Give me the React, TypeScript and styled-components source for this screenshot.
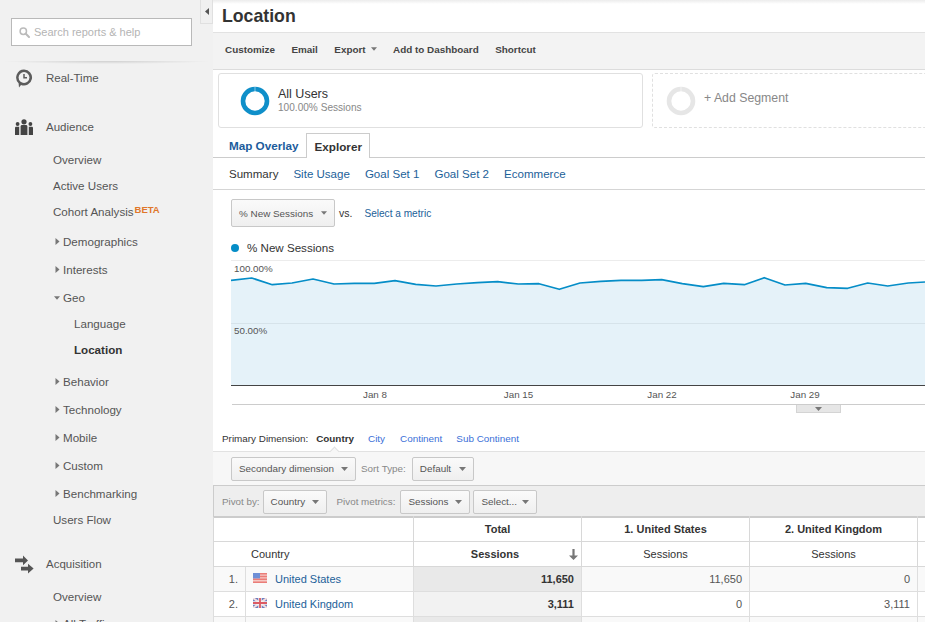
import React from 'react';
import styled, { createGlobalStyle } from 'styled-components';

const GlobalStyle = createGlobalStyle`
  html, body {
    margin: 0;
    padding: 0;
    background: #fff;
    overflow: hidden;
  }
  * {
    box-sizing: border-box;
  }
`;

const Page = styled.div`
  position: relative;
  display: flex;
  width: 925px;
  height: 622px;
  overflow: hidden;
  font-family: 'Liberation Sans', Arial, sans-serif;
  color: #333;
`;

/* sidebar */

const Sidebar = styled.aside`
  flex: 0 0 213px;
  height: 622px;
  background: #f1f1f1;
  overflow: hidden;
`;

const SearchArea = styled.div`
  height: 62px;
  padding: 18px 21px 0 11px;
`;

const SearchBox = styled.div`
  display: flex;
  align-items: center;
  gap: 4px;
  height: 28px;
  padding-left: 7px;
  background: #fff;
  border: 1px solid #b9b9b9;
  font-size: 11px;
  color: #b4b4b4;
`;

const SearchShadow = styled.div`
  height: 3px;
  margin: -1px 4px -2px;
  background: radial-gradient(ellipse at center top, rgba(0, 0, 0, 0.14), rgba(0, 0, 0, 0) 72%);
`;

const SectionRow = styled.div<{ $gap: number }>`
  display: flex;
  align-items: center;
  height: 30px;
  margin-top: ${(p) => p.$gap}px;
  font-size: 11.5px;
  color: #555;
`;

const SectionIcon = styled.span`
  display: flex;
  justify-content: center;
  width: 46px;
  padding-left: 2px;
`;

const SubItem = styled.div<{ $bold?: boolean; $indent?: number }>`
  display: flex;
  align-items: center;
  height: 26px;
  padding-left: ${(p) => p.$indent ?? 53}px;
  font-size: 11.6px;
  font-weight: ${(p) => (p.$bold ? 700 : 400)};
  color: ${(p) => (p.$bold ? '#333' : '#555')};
`;

const Beta = styled.span`
  margin: -3px 0 0 1px;
  font-size: 9.5px;
  font-weight: 700;
  color: #e0772b;
  line-height: 1;
`;

const NavGroup = styled.div<{ $gap: number }>`
  margin-top: ${(p) => p.$gap}px;
`;

const ExpandItem = styled.div<{ $open?: boolean }>`
  display: flex;
  align-items: center;
  height: 28px;
  padding-left: ${(p) => (p.$open ? 54 : 55)}px;
  font-size: 11.6px;
  color: #555;
`;

const Twisty = styled.svg<{ $open?: boolean }>`
  flex: 0 0 ${(p) => (p.$open ? 6 : 5)}px;
  width: ${(p) => (p.$open ? 6 : 5)}px;
  height: 7px;
  margin-right: 3px;
`;

const CollapseHandle = styled.div`
  position: absolute;
  left: 200px;
  top: 0;
  display: flex;
  align-items: center;
  justify-content: center;
  width: 13px;
  height: 24px;
  background: #f0f0f0;
  border: 1px solid #e0e0e0;
  border-top: 0;
`;

/* main column */

const Main = styled.main`
  flex: 1;
  min-width: 0;
`;

const TitleBar = styled.header`
  display: flex;
  align-items: center;
  height: 33px;
  padding-left: 9px;
  background: linear-gradient(#ececec 0, #fff 4px);
  border-bottom: 1px solid #e2e2e2;
`;

const Title = styled.h1`
  margin: 0;
  font-size: 17.7px;
  font-weight: 700;
  color: #333;
`;

const Toolbar = styled.div`
  display: flex;
  align-items: center;
  gap: 16.5px;
  height: 37px;
  padding: 0 0 4px 12px;
  background: #f3f3f3;
  border-bottom: 1px solid #dcdcdc;
`;

const ToolButton = styled.span`
  display: flex;
  align-items: center;
  gap: 5px;
  font-size: 9.9px;
  font-weight: 700;
  color: #444;
`;

const Segments = styled.div`
  display: flex;
  gap: 9px;
  height: 55px;
  margin: 3px 0 0 5px;
`;

const SegmentCard = styled.div<{ $ghost?: boolean }>`
  display: flex;
  align-items: center;
  flex: ${(p) => (p.$ghost ? '1' : '0 0 425px')};
  padding-left: ${(p) => (p.$ghost ? 13 : 21)}px;
  gap: 8px;
  margin-right: ${(p) => (p.$ghost ? -4 : 0)}px;
  border: 1px ${(p) => (p.$ghost ? 'dashed' : 'solid')} #e0e0e0;
  border-radius: 3px;
`;

const SegmentName = styled.div`
  font-size: 12.5px;
  line-height: 14px;
  color: #333;
`;

const SegmentMeta = styled.div`
  font-size: 10.1px;
  line-height: 13px;
  color: #888;
`;

const AddSegment = styled.span`
  margin-bottom: 5px;
  font-size: 12.3px;
  color: #888;
`;

const ViewTabs = styled.div`
  display: flex;
  align-items: flex-end;
  height: 25px;
  margin-top: 5px;
  padding-left: 9px;
  border-bottom: 1px solid #ccc;
`;

const ViewTab = styled.div<{ $active?: boolean }>`
  display: flex;
  align-items: center;
  height: ${(p) => (p.$active ? 25 : 24)}px;
  margin-bottom: ${(p) => (p.$active ? -1 : 0)}px;
  margin-right: 7px;
  padding: ${(p) => (p.$active ? '0 7px 0 8px' : '0 0 0 7px')};
  background: #fff;
  border: ${(p) => (p.$active ? '1px solid #ccc' : '0')};
  border-bottom: 0;
  font-size: 11.7px;
  font-weight: 700;
  color: ${(p) => (p.$active ? '#333' : '#1c5c9c')};
`;

const SubTabs = styled.nav`
  display: flex;
  align-items: center;
  gap: 15px;
  height: 32px;
  padding-left: 16px;
  border-bottom: 1px solid #d5d5d5;
  font-size: 11.55px;
`;

const SubTab = styled.span<{ $active?: boolean }>`
  color: ${(p) => (p.$active ? '#333' : '#1c6199')};
`;

const MetricRow = styled.div`
  display: flex;
  align-items: center;
  height: 28px;
  margin: 9px 0 0 18px;
`;

const SelectButton = styled.span<{ $w: number; $h?: number; $left?: number }>`
  display: flex;
  align-items: center;
  justify-content: space-between;
  flex: 0 0 ${(p) => p.$w}px;
  height: ${(p) => p.$h ?? 24}px;
  margin-left: ${(p) => p.$left ?? 0}px;
  padding: 0 7px;
  background: linear-gradient(#fafafa, #efefef);
  border: 1px solid #c8c8c8;
  border-radius: 2px;
  font-size: 9.9px;
  color: #555;
`;

const Versus = styled.span`
  margin-left: 4px;
  font-size: 10.5px;
  color: #333;
`;

const MetricLink = styled.span`
  margin-left: 12px;
  font-size: 10.1px;
  color: #1c6199;
`;

const Legend = styled.div`
  display: flex;
  align-items: center;
  height: 16px;
  margin: 12px 0 5px 18px;
  font-size: 11.6px;
  color: #333;
`;

const LegendDot = styled.span`
  width: 8px;
  height: 8px;
  margin: 2px 8px 0 0;
  border-radius: 50%;
  background: #058dc7;
`;

const ChartFrame = styled.svg`
  display: block;
  width: 694px;
  height: 145px;
  margin-left: 18px;
`;

const ChartHandle = styled.div`
  display: flex;
  justify-content: center;
  padding-top: 2px;
  width: 45px;
  height: 8px;
  margin-left: 583px;
  background: #e6e6e6;
  border: 1px solid #d4d4d4;
  border-top: 0;
`;

const PrimaryRow = styled.div`
  position: relative;
  display: flex;
  align-items: center;
  height: 39px;
  padding: 13px 0 0 9px;
  border-bottom: 1px solid #e2e2e2;
  font-size: 9.9px;
  color: #333;
`;

const Notch = styled.span`
  position: absolute;
  left: 118px;
  bottom: -1px;
  width: 7px;
  height: 7px;
  background: #f7f7f7;
  border: 1px solid #e2e2e2;
  border-right: 0;
  border-bottom: 0;
  transform: translateY(3px) rotate(45deg);
`;

const PrimaryLink = styled.span<{ $left: number }>`
  margin-left: ${(p) => p.$left}px;
  color: #3a6fd8;
`;

const PrimaryCurrent = styled.b`
  margin-left: 8px;
  color: #333;
`;

const TableTools = styled.div`
  display: flex;
  align-items: center;
  height: 33px;
  padding-left: 18px;
  background: #f7f7f7;
  font-size: 9.9px;
  color: #888;
`;

const ToolLabel = styled.span<{ $left?: number; $right?: number }>`
  margin-left: ${(p) => p.$left ?? 0}px;
  margin-right: ${(p) => p.$right ?? 0}px;
  color: #888;
`;

const PivotBar = styled.div`
  display: flex;
  align-items: center;
  height: 33px;
  padding-left: 8px;
  background: #eee;
  border: 1px solid #ccc;
  border-right: 0;
  font-size: 9.8px;
`;

const ReportTable = styled.table`
  table-layout: fixed;
  width: 812px;
  margin-top: -2px;
  border-collapse: collapse;
  font-size: 11px;
`;

const Column = styled.col<{ $w: number }>`
  width: ${(p) => p.$w}px;
`;

const HeadCell = styled.th<{ $plain?: boolean; $align?: string; $indent?: number }>`
  position: relative;
  height: 25px;
  padding: 0 7px 0 ${(p) => p.$indent ?? 7}px;
  border: 1px solid #d8d8d8;
  border-top-color: #ccc;
  font-size: 11px;
  font-weight: ${(p) => (p.$plain ? 400 : 700)};
  text-align: ${(p) => p.$align ?? 'center'};
  color: #333;
`;

const SortedLabel = styled.span`
  margin-right: 5px;
`;

const SortArrow = styled.svg`
  position: absolute;
  right: 3px;
  top: 7px;
`;

const Cell = styled.td<{ $tone?: string; $align?: string }>`
  height: 25px;
  padding: 0 7px;
  background: ${(p) => p.$tone ?? '#fff'};
  border: 1px solid #dedede;
  text-align: ${(p) => p.$align ?? 'right'};
  color: #555;
`;

const TotalCell = styled(Cell)`
  font-weight: 700;
  color: #333;
`;

const CountryLink = styled.span`
  display: flex;
  align-items: center;
  gap: 8px;
  color: #1c6199;
`;

const FlagBox = styled.span`
  display: flex;
  margin-bottom: 3px;
`;

/* drawings */

const Caret = ({ size = 7 }: { size?: number }) => (
  <svg width={size} height={4} viewBox="0 0 7 4">
    <path d="M0 0h7L3.5 4z" fill="#777" />
  </svg>
);

const TwistyRight = () => (
  <Twisty viewBox="0 0 5 7">
    <path d="M0.5 0l4 3.5-4 3.5z" fill="#777" />
  </Twisty>
);

const TwistyDown = () => (
  <Twisty $open viewBox="0 0 7 7">
    <path d="M0 2h7L3.5 6z" fill="#777" />
  </Twisty>
);

const SearchGlyph = () => (
  <svg width="11" height="11" viewBox="0 0 11 11">
    <circle cx="4.3" cy="4.3" r="3.2" fill="none" stroke="#bbb" strokeWidth="1.5" />
    <path d="M6.8 6.8l3.2 3.2" stroke="#bbb" strokeWidth="2" strokeLinecap="round" />
  </svg>
);

const ClockBubble = () => (
  <svg width="18" height="19" viewBox="0 0 18 19">
    <path d="M9 .5a8 8 0 1 1-3 15.4L4 18.6l-.4-4.4A8 8 0 0 1 9 .5z" fill="#5c5c5c" />
    <circle cx="9" cy="8.5" r="5.4" fill="#f1f1f1" />
    <path d="M9 5v3.8h3" fill="none" stroke="#5c5c5c" strokeWidth="1.5" />
  </svg>
);

const PeopleGlyph = () => (
  <svg width="18" height="17" viewBox="0 0 18 17">
    <g fill="#444">
      <circle cx="9" cy="2.8" r="2.6" />
      <circle cx="2.6" cy="5" r="1.9" />
      <circle cx="15.4" cy="5" r="1.9" />
      <path d="M5.6 7.6c0-1 .7-1.5 1.5-1.5h3.8c.8 0 1.5.5 1.5 1.5V16H5.6z" />
      <path d="M0 9c0-.9.6-1.3 1.3-1.3h2.9V16H0z" />
      <path d="M13.8 7.7h2.9c.7 0 1.3.4 1.3 1.3v7h-4.2z" />
    </g>
  </svg>
);

const ArrowsGlyph = () => (
  <svg width="19" height="19" viewBox="0 0 19 19">
    <g fill="#555">
      <path d="M0 3.6h8V.6l5 4.8-5 4.8V7.2H0z" />
      <path d="M6 11.8h7V8.8l5.6 4.8-5.6 4.8v-3H6z" />
    </g>
  </svg>
);

const Donut = ({ color }: { color: string }) => (
  <svg width="30" height="30" viewBox="0 0 30 30">
    <circle cx="15" cy="15" r="12" fill="none" stroke={color} strokeWidth="4.6" />
    <path d="M15 1v5" stroke="#fff" strokeWidth="0.5" />
  </svg>
);

const UsFlag = () => (
  <svg width="14" height="10" viewBox="0 0 14 10">
    <rect width="14" height="10" fill="#f6c9c4" />
    <path d="M0 0h14v1.4H0zM0 2.8h14v1.4H0zM0 5.6h14V7H0zM0 8.4h14V10H0z" fill="#ea7d78" />
    <rect width="7" height="5.4" fill="#6f8fd6" />
  </svg>
);

const UkFlag = () => (
  <svg width="14" height="10" viewBox="0 0 14 10">
    <rect width="14" height="10" fill="#6f7fc0" />
    <path d="M0 0l14 10M14 0L0 10" stroke="#f3dede" strokeWidth="2" />
    <path d="M7 0v10M0 5h14" stroke="#f5f5f5" strokeWidth="3.4" />
    <path d="M7 0v10M0 5h14" stroke="#dc5a63" strokeWidth="1.8" />
  </svg>
);

const CHART_X = 231;
const CHART_Y = 260;

const chartPoints: [number, number][] = [
  [231, 280.3], [251.7, 278], [272.3, 284.7], [292, 283], [313, 279], [334, 284],
  [354.3, 283.3], [374.3, 283.3], [395, 280.7], [415.7, 284.3], [436, 286], [456.7, 284],
  [477.3, 282.7], [497.7, 281.7], [518.3, 284], [539, 283.7], [559.3, 289.3], [580, 283],
  [600.7, 281.3], [621, 280.3], [641.7, 280.3], [661.7, 279.7], [682.3, 283.7], [703.3, 286.7],
  [723.7, 283.3], [744.3, 284.7], [764.3, 277.7], [785, 285], [805.7, 283.3], [826.7, 287.7],
  [847.7, 288.3], [867.7, 283], [887.7, 286], [908.3, 283], [925, 282],
];

const linePath = chartPoints
  .map(([x, y], i) => `${i ? 'L' : 'M'}${(x - CHART_X).toFixed(1)} ${(y - CHART_Y).toFixed(1)}`)
  .join(' ');

const chartTicks = [
  { label: 'Jan 8', x: 144 },
  { label: 'Jan 15', x: 287.5 },
  { label: 'Jan 22', x: 431 },
  { label: 'Jan 29', x: 574 },
];

const SessionsChart = () => (
  <ChartFrame viewBox="0 0 694 145">
    <path d="M0 .5h694" stroke="#ececec" />
    <path d={`${linePath} L694 125 L0 125 Z`} fill="#e5f2f9" />
    <path d="M0 63.5h694" stroke="#d6e3ea" />
    <path d={linePath} fill="none" stroke="#058dc7" strokeWidth="1.7" strokeLinejoin="round" />
    <path d="M0 125.5h694" stroke="#444" />
    <path d="M1 144.5h693" stroke="#ccc" />
    <g fontFamily="'Liberation Sans', Arial, sans-serif" fontSize="9.8" fill="#555">
      <text x="3" y="12">100.00%</text>
      <text x="3" y="74">50.00%</text>
      {chartTicks.map((t) => (
        <text key={t.label} x={t.x} y="137.5" textAnchor="middle">
          {t.label}
        </text>
      ))}
    </g>
  </ChartFrame>
);

const audienceItems = ['Behavior', 'Technology', 'Mobile', 'Custom', 'Benchmarking'];

export default function App() {
  return (
    <Page>
      <GlobalStyle />
      <Sidebar>
        <SearchArea>
          <SearchBox>
            <SearchGlyph />
            Search reports &amp; help
          </SearchBox>
        </SearchArea>
        <SearchShadow />

        <SectionRow $gap={1}>
          <SectionIcon>
            <ClockBubble />
          </SectionIcon>
          Real-Time
        </SectionRow>

        <SectionRow $gap={19}>
          <SectionIcon>
            <PeopleGlyph />
          </SectionIcon>
          Audience
        </SectionRow>

        <NavGroup $gap={4}>
          <SubItem>Overview</SubItem>
          <SubItem>Active Users</SubItem>
          <SubItem>
            Cohort Analysis<Beta>BETA</Beta>
          </SubItem>
        </NavGroup>

        <NavGroup $gap={3}>
          <ExpandItem>
            <TwistyRight />
            Demographics
          </ExpandItem>
          <ExpandItem>
            <TwistyRight />
            Interests
          </ExpandItem>
          <ExpandItem $open>
            <TwistyDown />
            Geo
          </ExpandItem>
        </NavGroup>

        <NavGroup $gap={-1}>
          <SubItem $indent={74}>Language</SubItem>
          <SubItem $indent={74} $bold>
            Location
          </SubItem>
        </NavGroup>

        <NavGroup $gap={5}>
          {audienceItems.map((item) => (
            <ExpandItem key={item}>
              <TwistyRight />
              {item}
            </ExpandItem>
          ))}
        </NavGroup>

        <NavGroup $gap={-1}>
          <SubItem>Users Flow</SubItem>
        </NavGroup>

        <SectionRow $gap={17}>
          <SectionIcon>
            <ArrowsGlyph />
          </SectionIcon>
          Acquisition
        </SectionRow>

        <NavGroup $gap={4}>
          <SubItem>Overview</SubItem>
          <ExpandItem>
            <TwistyRight />
            All Traffic
          </ExpandItem>
        </NavGroup>
      </Sidebar>

      <CollapseHandle>
        <svg width="4" height="7" viewBox="0 0 4 7">
          <path d="M4 0v7L0 3.5z" fill="#555" />
        </svg>
      </CollapseHandle>

      <Main>
        <TitleBar>
          <Title>Location</Title>
        </TitleBar>

        <Toolbar>
          <ToolButton>Customize</ToolButton>
          <ToolButton>Email</ToolButton>
          <ToolButton>
            Export <Caret size={6} />
          </ToolButton>
          <ToolButton>Add to Dashboard</ToolButton>
          <ToolButton>Shortcut</ToolButton>
        </Toolbar>

        <Segments>
          <SegmentCard>
            <Donut color="#0f8fc9" />
            <div>
              <SegmentName>All Users</SegmentName>
              <SegmentMeta>100.00% Sessions</SegmentMeta>
            </div>
          </SegmentCard>
          <SegmentCard $ghost>
            <Donut color="#e6e6e6" />
            <AddSegment>+ Add Segment</AddSegment>
          </SegmentCard>
        </Segments>

        <ViewTabs>
          <ViewTab>Map Overlay</ViewTab>
          <ViewTab $active>Explorer</ViewTab>
        </ViewTabs>

        <SubTabs>
          <SubTab $active>Summary</SubTab>
          <SubTab>Site Usage</SubTab>
          <SubTab>Goal Set 1</SubTab>
          <SubTab>Goal Set 2</SubTab>
          <SubTab>Ecommerce</SubTab>
        </SubTabs>

        <MetricRow>
          <SelectButton $w={104} $h={28}>
            % New Sessions <Caret size={6} />
          </SelectButton>
          <Versus>vs.</Versus>
          <MetricLink>Select a metric</MetricLink>
        </MetricRow>

        <Legend>
          <LegendDot />
          % New Sessions
        </Legend>

        <SessionsChart />
        <ChartHandle>
          <Caret />
        </ChartHandle>

        <PrimaryRow>
          Primary Dimension:
          <PrimaryCurrent>Country</PrimaryCurrent>
          <PrimaryLink $left={14}>City</PrimaryLink>
          <PrimaryLink $left={15}>Continent</PrimaryLink>
          <PrimaryLink $left={14}>Sub Continent</PrimaryLink>
          <Notch />
        </PrimaryRow>

        <TableTools>
          <SelectButton $w={125}>
            Secondary dimension <Caret />
          </SelectButton>
          <ToolLabel $left={5} $right={6}>
            Sort Type:
          </ToolLabel>
          <SelectButton $w={62}>
            Default <Caret />
          </SelectButton>
        </TableTools>

        <PivotBar>
          <ToolLabel $right={3}>Pivot by:</ToolLabel>
          <SelectButton $w={64}>
            Country <Caret />
          </SelectButton>
          <ToolLabel $left={10} $right={5}>
            Pivot metrics:
          </ToolLabel>
          <SelectButton $w={70}>
            Sessions <Caret />
          </SelectButton>
          <SelectButton $w={64} $left={3}>
            Select... <Caret />
          </SelectButton>
        </PivotBar>

        <ReportTable>
          <colgroup>
            <Column $w={32} />
            <Column $w={168} />
            <Column $w={168} />
            <Column $w={168} />
            <Column $w={168} />
            <Column $w={108} />
          </colgroup>
          <thead>
            <tr>
              <HeadCell colSpan={2} />
              <HeadCell>Total</HeadCell>
              <HeadCell>1. United States</HeadCell>
              <HeadCell>2. United Kingdom</HeadCell>
              <HeadCell />
            </tr>
            <tr>
              <HeadCell colSpan={2} $plain $align="left" $indent={37}>
                Country
              </HeadCell>
              <HeadCell>
                <SortedLabel>Sessions</SortedLabel>
                <SortArrow width="9" height="11" viewBox="0 0 9 11">
                  <path d="M3.4 0h2.2v6.5H9L4.5 11 0 6.5h3.4z" fill="#777" />
                </SortArrow>
              </HeadCell>
              <HeadCell $plain>Sessions</HeadCell>
              <HeadCell $plain>Sessions</HeadCell>
              <HeadCell />
            </tr>
          </thead>
          <tbody>
            <tr>
              <Cell $tone="#f9f9f9">1.</Cell>
              <Cell $tone="#f9f9f9" $align="left">
                <CountryLink>
                  <FlagBox>
                    <UsFlag />
                  </FlagBox>
                  United States
                </CountryLink>
              </Cell>
              <TotalCell $tone="#e9e9e9">11,650</TotalCell>
              <Cell $tone="#f9f9f9">11,650</Cell>
              <Cell $tone="#f9f9f9">0</Cell>
              <Cell $tone="#f9f9f9" />
            </tr>
            <tr>
              <Cell>2.</Cell>
              <Cell $align="left">
                <CountryLink>
                  <FlagBox>
                    <UkFlag />
                  </FlagBox>
                  United Kingdom
                </CountryLink>
              </Cell>
              <TotalCell $tone="#f2f2f2">3,111</TotalCell>
              <Cell>0</Cell>
              <Cell>3,111</Cell>
              <Cell />
            </tr>
            <tr>
              <Cell $tone="#f9f9f9" />
              <Cell $tone="#f9f9f9" />
              <TotalCell $tone="#e9e9e9" />
              <Cell $tone="#f9f9f9" />
              <Cell $tone="#f9f9f9" />
              <Cell $tone="#f9f9f9" />
            </tr>
          </tbody>
        </ReportTable>
      </Main>
    </Page>
  );
}
